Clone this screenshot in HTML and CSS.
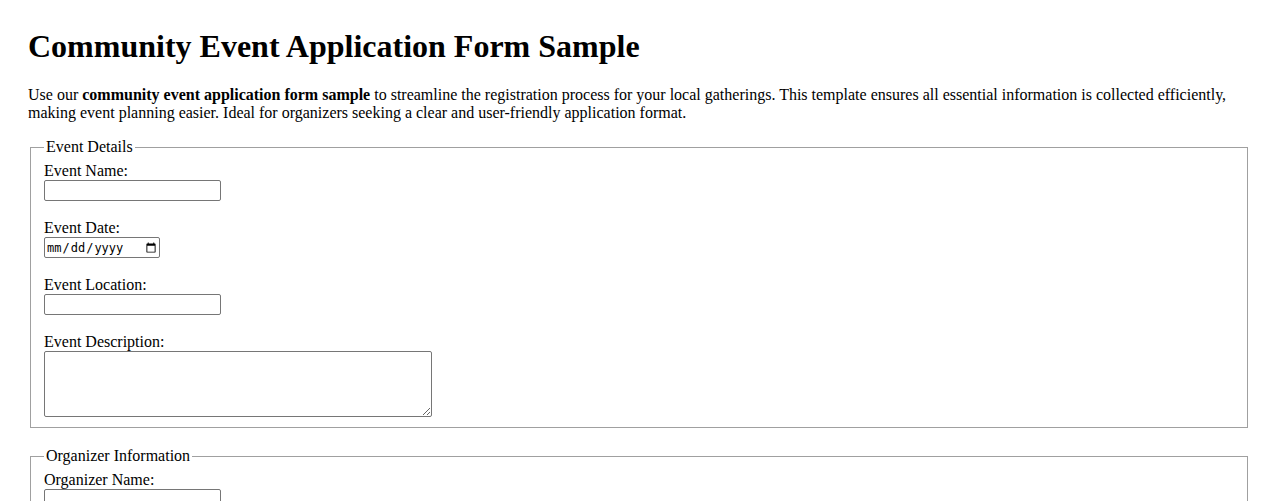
FILE: index.html
```html
<!DOCTYPE html>
<html lang="en">
<head>
<meta charset="utf-8">
<title>Community Event Application Form Sample</title>
<link rel="stylesheet" href="styles.css">
</head>
<body>
<h1 class="title">Community Event Application Form Sample</h1>
<p class="intro">Use our <strong>community event application form sample</strong> to streamline the registration process for your local gatherings. This template ensures all essential information is collected efficiently, making event planning easier. Ideal for organizers seeking a clear and user-friendly application format.</p>
<form class="form">
<fieldset class="group">
<legend class="legend">Event Details</legend>
<label for="eventName">Event Name:</label><br>
<input class="field" type="text" id="eventName" name="eventName"><br><br>
<label for="eventDate">Event Date:</label><br>
<input class="field-date" type="date" id="eventDate" name="eventDate"><br><br>
<label for="eventLocation">Event Location:</label><br>
<input class="field" type="text" id="eventLocation" name="eventLocation"><br><br>
<label for="eventDescription">Event Description:</label><br>
<textarea class="area" id="eventDescription" name="eventDescription" rows="4"></textarea>
</fieldset>
<fieldset class="group">
<legend class="legend">Organizer Information</legend>
<label for="organizerName">Organizer Name:</label><br>
<input class="field" type="text" id="organizerName" name="organizerName"><br><br>
<label for="organizerEmail">Email:</label><br>
<input class="field" type="email" id="organizerEmail" name="organizerEmail"><br><br>
</fieldset>
</form>
</body>
</html>
```
FILE: styles.css
```css
html, body {
  background: #ffffff;
}
body {
  margin: 28px;
  font-family: "Liberation Serif", "Times New Roman", serif;
  font-size: 16px;
  color: #000000;
}
.title {
  font-size: 32px;
  font-weight: bold;
  margin: 0 0 21px;
}
.intro {
  margin: 16px 0;
  line-height: 18px;
}
.group {
  margin: 0 2px 19px;
  padding: 6px 12px 10px 13px;
  border: 1px solid #a0a0a0;
  line-height: 18px;
}
.legend {
  padding: 0 2px;
}
.field {
  width: 177px;
  height: 21px;
  box-sizing: border-box;
  margin: 0;
  border: 1px solid #767676;
  border-radius: 2px;
  vertical-align: top;
}
.field-date {
  width: 116px;
  height: 21px;
  box-sizing: border-box;
  margin: 0;
  border: 1px solid #767676;
  border-radius: 2px;
  vertical-align: top;
  font-size: 12px;
}
.area {
  width: 388px;
  height: 66px;
  box-sizing: border-box;
  margin: 0;
  border: 1px solid #767676;
  border-radius: 2px;
  vertical-align: top;
}
```
